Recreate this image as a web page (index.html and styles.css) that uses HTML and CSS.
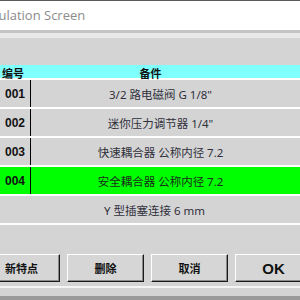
FILE: index.html
```html
<!DOCTYPE html>
<html lang="zh">
<head>
    <meta charset="UTF-8">
    <title>Simulation Screen</title>
    <link rel="stylesheet" href="styles.css">
</head>
<body>
    <div class="window">
        <div class="titlebar"><span class="title">Simulation Screen</span></div>
        <div class="menuline"></div>
        <div class="content">
            <div class="list">
                <div class="row head">
                    <div class="num">编号</div>
                    <div class="name">备件</div>
                </div>
                <div class="row">
                    <div class="num">001</div>
                    <div class="name">3/2 路电磁阀 G 1/8"</div>
                </div>
                <div class="row">
                    <div class="num">002</div>
                    <div class="name">迷你压力调节器 1/4"</div>
                </div>
                <div class="row">
                    <div class="num">003</div>
                    <div class="name">快速耦合器 公称内径 7.2</div>
                </div>
                <div class="row selected">
                    <div class="num">004</div>
                    <div class="name">安全耦合器 公称内径 7.2</div>
                </div>
                <div class="row plain">
                    <div class="num"></div>
                    <div class="name">Y 型插塞连接 6 mm</div>
                </div>
            </div>
            <div class="buttons">
                <button class="btn">新特点</button>
                <button class="btn">删除</button>
                <button class="btn">取消</button>
                <button class="btn ok">OK</button>
            </div>
            <div class="footer"></div>
        </div>
    </div>
</body>
</html>
```

FILE: styles.css
```css
body {
    margin: 0;
    width: 300px;
    height: 300px;
    overflow: hidden;
    background-color: #d4d4d4;
    font-family: "Noto Sans", "Noto Sans CJK SC", sans-serif;
}
.titlebar {
    height: 29px;
    background-color: #fff;
    border-top: 1px solid #5a5a5a;
    overflow: hidden;
    white-space: nowrap;
}
.title {
    display: inline-block;
    margin-left: -24px;
    margin-top: 5px;
    font-family: "Open Sans", sans-serif;
    font-size: 13px;
    color: #8c8c8c;
}
.menuline {
    height: 5px;
    border-top: 3px solid #c4c4c4;
    background-color: #e8e8e8;
}
.content {
    padding-top: 27px;
}
.list {
    display: flex;
    flex-direction: column;
    gap: 2px;
    background-color: #fff;
    padding-bottom: 2px;
}
.row {
    display: grid;
    grid-template-columns: 31px 1fr;
    height: 27px;
    background-color: #d4d4d4;
    align-items: center;
}
.row .num {
    height: 100%;
    display: flex;
    align-items: center;
    padding-left: 5px;
    font-family: "Liberation Sans", "Noto Sans CJK SC", sans-serif;
    font-weight: bold;
    font-size: 12px;
    color: #111;
    border-right: 1px solid #000;
}
.row .name {
    text-align: center;
    padding-right: 10px;
    font-size: 11.5px;
    color: #30303c;
}
.row.head {
    height: 13px;
    background-color: #80ffff;
}
.row.head .num {
    border-right: none;
    padding-left: 2px;
    font-family: "Noto Sans CJK SC", sans-serif;
    font-size: 11px;
}
.row.head .name {
    font-weight: bold;
    font-size: 11px;
    color: #111;
    padding-right: 30px;
}
.row.selected {
    background-color: #00ff00;
}
.row.selected .name {
    color: #1c2a1c;
}
.row.plain .num {
    border-right: none;
}
.row.plain .name {
    padding-right: 22px;
}
.buttons {
    display: flex;
    gap: 7px;
    margin-left: -17px;
    margin-top: 29px;
}
.btn {
    flex: none;
    width: 77px;
    height: 28px;
    background-color: #d6d6d6;
    border: 1px solid;
    border-color: #fff #1a1a1a #1a1a1a #fff;
    box-shadow: inset -1px -1px 0 #8a8a8a;
    font-family: "Noto Sans CJK SC", sans-serif;
    font-weight: bold;
    font-size: 11px;
    color: #111;
    padding: 0;
}
.btn.ok {
    font-family: "Liberation Sans", sans-serif;
    font-size: 15px;
}
.footer {
    margin-top: 4px;
    height: 8px;
    border-top: 2px solid #f4f4f4;
    border-bottom: 4px solid #9a9a9a;
}
```
